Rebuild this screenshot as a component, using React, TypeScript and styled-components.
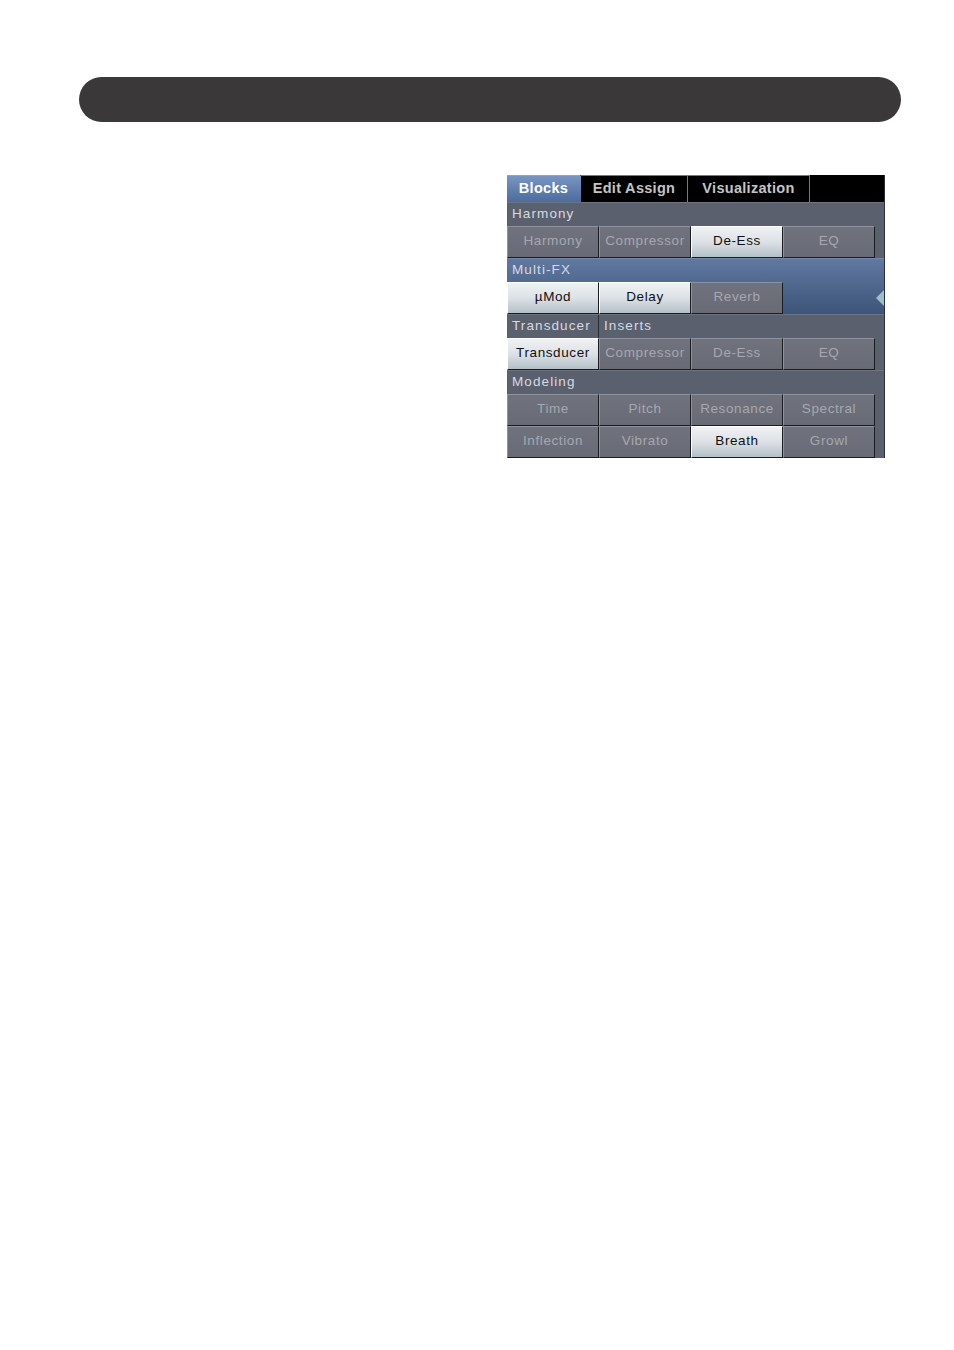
import React from "react";
import styled, { createGlobalStyle } from "styled-components";

const GlobalStyle = createGlobalStyle`
  body {
    margin: 0;
    background: #ffffff;
    font-family: "Liberation Sans", Arial, sans-serif;
  }
`;

const Page = styled.div`
  width: 954px;
  height: 1350px;
  padding: 77px 53px 0 79px;
  box-sizing: border-box;
`;

const HeaderBar = styled.div`
  height: 45px;
  border-radius: 23px;
  background: #3a3839;
`;

const PanelRow = styled.div`
  display: flex;
  justify-content: flex-end;
  padding-right: 16px;
  margin-top: 53px;
`;

const Panel = styled.div`
  width: 378px;
  display: flex;
  flex-direction: column;
  background: #5b606e;
  border-right: 1px solid #2c303c;
  box-sizing: border-box;
`;

const TabBar = styled.div`
  display: flex;
  height: 27px;
  background: #000;
`;

const Tab = styled.div<{ $active?: boolean; $width: number }>`
  width: ${(p) => p.$width}px;
  display: flex;
  align-items: center;
  justify-content: center;
  box-sizing: border-box;
  padding-bottom: 2px;
  font-size: 14.5px;
  font-weight: bold;
  letter-spacing: 0.3px;
  color: ${(p) => (p.$active ? "#ffffff" : "#c4c4c4")};
  background: ${(p) =>
    p.$active ? "linear-gradient(#7895c2, #4d6b9b)" : "#000"};
  border-top: 1px solid ${(p) => (p.$active ? "#8aa4cc" : "#7a7a7a")};
  border-right: 1px solid ${(p) => (p.$active ? "transparent" : "#7a7a7a")};
`;

const Section = styled.div<{ $blue?: boolean }>`
  display: flex;
  flex-direction: column;
  background: ${(p) =>
    p.$blue ? "linear-gradient(#6079a0, #3e5479)" : "#5b606e"};
  border-top: 1px solid ${(p) => (p.$blue ? "#7088ae" : "#6e7382")};
`;

const LabelRow = styled.div`
  display: flex;
  height: 23px;
  align-items: center;
`;

const Label = styled.div<{ $width?: number; $divider?: boolean }>`
  width: ${(p) => (p.$width ? `${p.$width}px` : "auto")};
  box-sizing: border-box;
  height: 100%;
  display: flex;
  align-items: center;
  padding: 0 0 3px 5px;
  font-size: 13.5px;
  letter-spacing: 1.1px;
  color: #d6dae2;
  border-right: ${(p) => (p.$divider ? "1px solid #2a2d36" : "none")};
`;

const ButtonRow = styled.div`
  display: flex;
  align-items: stretch;
`;

const ButtonGrid = styled.div`
  display: grid;
  grid-template-columns: repeat(4, 92px);
  grid-auto-rows: 32px;
`;

const Side = styled.div`
  flex: 1;
  display: flex;
  align-items: center;
  justify-content: flex-end;
`;

const Arrow = styled.div`
  width: 0;
  height: 0;
  border-top: 8px solid transparent;
  border-bottom: 8px solid transparent;
  border-right: 8px solid #9cc0c8;
`;

const Button = styled.div<{ $on?: boolean }>`
  display: flex;
  align-items: center;
  justify-content: center;
  box-sizing: border-box;
  padding-bottom: 3px;
  font-size: 13.5px;
  letter-spacing: 0.6px;
  color: ${(p) => (p.$on ? "#101010" : "#a4a8b0")};
  background: ${(p) =>
    p.$on
      ? "linear-gradient(#f0f2f4 0%, #dde1e5 50%, #b3c0c8 100%)"
      : "linear-gradient(#70737d, #686b75)"};
  border-top: 1px solid ${(p) => (p.$on ? "#ffffff" : "#8e929c")};
  border-left: 1px solid ${(p) => (p.$on ? "#ffffff" : "#8e929c")};
  border-right: 1px solid #1a1c22;
  border-bottom: 1px solid #1a1c22;
`;

type Btn = { label: string; on?: boolean };

const Buttons: React.FC<{ items: Btn[] }> = ({ items }) => (
  <ButtonGrid>
    {items.map((b, i) => (
      <Button key={i} $on={b.on}>
        {b.label}
      </Button>
    ))}
  </ButtonGrid>
);

export default function App() {
  return (
    <Page>
      <GlobalStyle />
      <HeaderBar />
      <PanelRow>
        <Panel>
          <TabBar>
            <Tab $active $width={74}>Blocks</Tab>
            <Tab $width={107}>Edit Assign</Tab>
            <Tab $width={122}>Visualization</Tab>
          </TabBar>

          <Section>
            <LabelRow>
              <Label>Harmony</Label>
            </LabelRow>
            <ButtonRow>
              <Buttons
                items={[
                  { label: "Harmony" },
                  { label: "Compressor" },
                  { label: "De-Ess", on: true },
                  { label: "EQ" },
                ]}
              />
            </ButtonRow>
          </Section>

          <Section $blue>
            <LabelRow>
              <Label>Multi-FX</Label>
            </LabelRow>
            <ButtonRow>
              <Buttons
                items={[
                  { label: "µMod", on: true },
                  { label: "Delay", on: true },
                  { label: "Reverb" },
                ]}
              />
              <Side>
                <Arrow />
              </Side>
            </ButtonRow>
          </Section>

          <Section>
            <LabelRow>
              <Label $width={92} $divider>
                Transducer
              </Label>
              <Label>Inserts</Label>
            </LabelRow>
            <ButtonRow>
              <Buttons
                items={[
                  { label: "Transducer", on: true },
                  { label: "Compressor" },
                  { label: "De-Ess" },
                  { label: "EQ" },
                ]}
              />
            </ButtonRow>
          </Section>

          <Section>
            <LabelRow>
              <Label>Modeling</Label>
            </LabelRow>
            <ButtonRow>
              <Buttons
                items={[
                  { label: "Time" },
                  { label: "Pitch" },
                  { label: "Resonance" },
                  { label: "Spectral" },
                  { label: "Inflection" },
                  { label: "Vibrato" },
                  { label: "Breath", on: true },
                  { label: "Growl" },
                ]}
              />
            </ButtonRow>
          </Section>
        </Panel>
      </PanelRow>
    </Page>
  );
}
